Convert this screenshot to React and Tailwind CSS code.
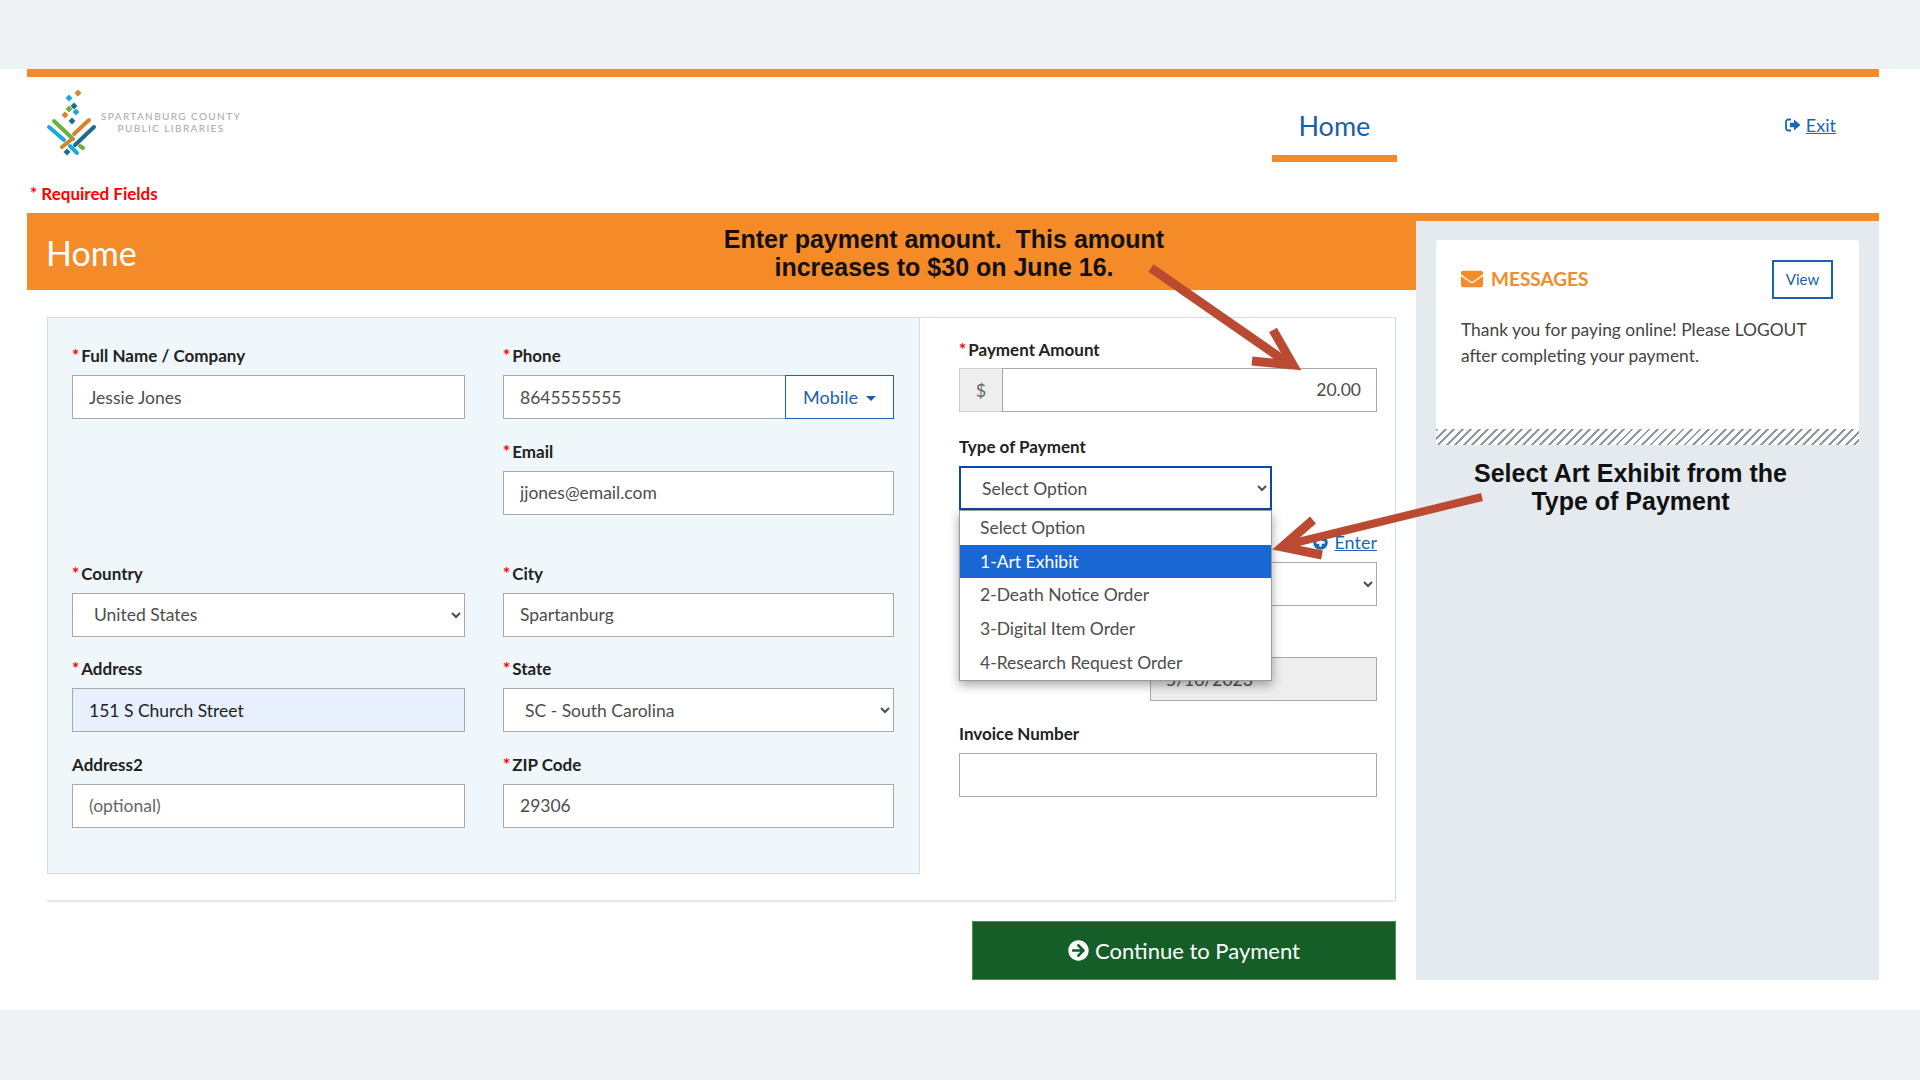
import React from 'react';
import { FaEnvelope, FaArrowCircleRight, FaPlusCircle } from 'react-icons/fa';

const Req = () => <span className="text-[#ff0000] mr-[2px]">*</span>;

const Label = ({ req, children }) => (
    <label className="block h-[23px] pt-px mb-[8px] leading-[22px] text-[17px] font-bold text-[#222]">
        {req && <Req />}
        {children}
    </label>
);

const inputCls = "block w-full h-[44px] px-[16px] border border-[#a9a9a9] text-[17.5px] outline-none placeholder:text-[#666]";
const selectCls = "block w-full h-[44px] pl-[17px] pr-[2px] border border-[#a9a9a9] bg-white text-[17.5px] text-[#4d4d4d] outline-none";

const Field = ({ label, req, value, placeholder, autofill }) => (
    <div className="h-[95.5px]">
        <Label req={req}>{label}</Label>
        <input
            readOnly
            value={value}
            placeholder={placeholder}
            className={inputCls + (autofill ? ' bg-[#e8f0fe] text-[#222]' : ' bg-white text-[#4d4d4d]')}
        />
    </div>
);

const SelectField = ({ label, req, value }) => (
    <div className="h-[95.5px]">
        <Label req={req}>{label}</Label>
        <select value={value} onChange={() => {}} className={selectCls}>
            <option>{value}</option>
        </select>
    </div>
);

const Logo = () => (
    <svg width="60" height="70" viewBox="40 88 60 70" fill="none" strokeLinecap="round" strokeWidth="4">
        <path d="M49 127L64 140" stroke="#1ba7e0" />
        <path d="M54 121L73 139" stroke="#6bb044" />
        <path d="M74 134L89 120" stroke="#d9822b" />
        <path d="M75 145L94 127" stroke="#1b6b94" />
        <path d="M62 147L72 139" stroke="#d9822b" />
        <path d="M70 146L77 153" stroke="#1ba7e0" />
        <path d="M80 146L83 148" stroke="#6bb044" />
        <g stroke="none">
            <path d="M78 89.5L81.5 93L78 96.5L74.5 93Z" fill="#d9822b" />
            <path d="M69 94.5L72.5 98L69 101.5L65.5 98Z" fill="#1ba7e0" />
            <path d="M74 102.5L77.5 106L74 109.5L70.5 106Z" fill="#1b6b94" />
            <path d="M69 105.5L72.5 109L69 112.5L65.5 109Z" fill="#6bb044" />
            <path d="M76 108.500L79.500 112L76 115.500L72.500 112Z" fill="#1ba7e0" />
            <path d="M65 111.500L68.500 115L65 118.500L61.500 115Z" fill="#d9822b" />
            <path d="M72 117.500L75.500 121L72 124.500L68.500 121Z" fill="#1b6b94" />
            <path d="M67 148.500L70.500 152L67 155.500L63.500 152Z" fill="#1b6b94" />
        </g>
    </svg>
);

const ExitIcon = () => (
    <svg width="16" height="14" viewBox="0 0 16 14" className="inline-block">
        <path d="M6 1.5H3.500A2.500 2.500 0 0 0 1 4v6a2.500 2.500 0 0 0 2.500 2.500H6" fill="none" stroke="#1a66b8" strokeWidth="1.800" />
        <path d="M5 4.800H9V1.500L15.500 7L9 12.500V9.200H5Z" fill="#1a66b8" />
    </svg>
);

const Arrows = () => (
    <svg className="absolute top-0 left-0 z-20 pointer-events-none" width="1920" height="1080" fill="none" stroke="#bb4a32" strokeWidth="9">
        <path d="M1151 268L1292 366" />
        <path d="M1273 330L1293 365L1252 361" />
        <path d="M1482 497L1290 544" strokeWidth="8" />
        <path d="M1313 520L1282 547L1322 555" />
    </svg>
);

const App = () => {
    return (
        <div className="relative w-[1920px] h-[1080px] overflow-hidden bg-[#eef2f5] font-['Lato','Noto_Sans',sans-serif]">
            <div className="h-[69px]" />
            <div className="h-[941px] bg-white pl-[27px] pr-[41px]">
                <div className="h-[8px] bg-[#f58a28]" />

                {/* header */}
                <div className="flex items-start h-[85px]">
                    <div className="flex items-start ml-[13px] pt-[11px]">
                        <Logo />
                        <div className="ml-px mt-[22px] text-center text-[10px] leading-[12px] tracking-[0.14em] text-[#a6a6a6]">
                            <div>SPARTANBURG COUNTY</div>
                            <div>PUBLIC LIBRARIES</div>
                        </div>
                    </div>
                    <div className="ml-auto w-[125px] h-[85px] pt-[30px] border-b-[7px] border-[#f58a28] text-center text-[27px] leading-[38px] text-[#1a5fa8]">
                        Home
                    </div>
                    <a href="#" className="flex items-center ml-[388px] mr-[43px] mt-[38px] text-[18px] leading-[20px] text-[#1a66b8] underline">
                        <ExitIcon />
                        <span className="ml-[5px]">Exit</span>
                    </a>
                </div>
                <div className="h-[51px] pt-[21px] pl-[3px] text-[17px] leading-[22px] font-bold text-[#ff0000]">
                    * Required Fields
                </div>

                <div className="flex items-stretch">
                    {/* main column */}
                    <div className="w-[1389px]">
                        <div className="relative h-[77px] bg-[#f58a28] flex items-center pl-[19px]">
                            <h1 className="w-[80px] mt-[2px] text-[34px] text-white">Home</h1>
                            <div className="ml-[578px] mt-[2px] w-[480px] text-center font-['Liberation_Sans',sans-serif] text-[25px] leading-[28px] font-bold text-[#111]">
                                <div className="whitespace-pre">Enter payment amount.  This amount</div>
                                <div>increases to $30 on June 16.</div>
                            </div>
                        </div>

                        <div className="pt-[27px] pl-[20px] pr-[20px]">
                            <div className="flex h-[585px] border-b-2 border-[#e4e8ea]">
                                {/* left form */}
                                <div className="w-[873px] h-[557px] bg-[#f0f7fa] border border-[#d5dde2] pl-[24px] pt-[26px]">
                                    <div className="grid grid-cols-[393px_391px] gap-x-[38px]">
                                        <div className="h-[217.5px]">
                                            <Field req label="Full Name / Company" value="Jessie Jones" />
                                        </div>
                                        <div className="h-[217.5px]">
                                            <div className="h-[95.5px]">
                                                <Label req>Phone</Label>
                                                <div className="flex">
                                                    <input readOnly value="8645555555" className={inputCls + ' border-r-0 bg-white text-[#4d4d4d]'} />
                                                    <button className="shrink-0 w-[109px] h-[44px] border border-[#1c5fb8] bg-white text-[18px] text-[#1a5fa8]">
                                                        Mobile
                                                        <span className="inline-block ml-[8px] align-middle border-x-[5px] border-t-[5px] border-x-transparent border-t-[#1a5fa8]" />
                                                    </button>
                                                </div>
                                            </div>
                                            <Field req label="Email" value="jjones@email.com" />
                                        </div>
                                        <SelectField req label="Country" value="United States" />
                                        <Field req label="City" value="Spartanburg" />
                                        <Field req autofill label="Address" value="151 S Church Street" />
                                        <SelectField req label="State" value="SC - South Carolina" />
                                        <Field label="Address2" value="" placeholder="(optional)" />
                                        <Field req label="ZIP Code" value="29306" />
                                    </div>
                                </div>

                                {/* right form */}
                                <div className="w-[476px] border-t border-r border-[#d5dde2] pl-[39px] pr-[18px] pt-[20px]">
                                    <label className="block h-[23px] pt-px mb-[7px] leading-[22px] text-[17px] font-bold text-[#222]">
                                        <Req />Payment Amount
                                    </label>
                                    <div className="flex h-[44px] mb-[23px]">
                                        <div className="w-[43px] flex items-center justify-center bg-[#eee] border border-r-0 border-[#ccc] text-[18px] text-[#666]">$</div>
                                        <input readOnly value="20.00" className="flex-1 min-w-0 px-[15px] border border-[#a9a9a9] text-right text-[17.5px] text-[#4d4d4d] outline-none" />
                                    </div>

                                    <Label>Type of Payment</Label>
                                    <div className="relative w-[313px] h-[44px] z-10">
                                        <select value="Select Option" onChange={() => {}} className="block w-full h-[44px] pl-[17px] pr-[2px] border-2 border-[#0f47a8] bg-white text-[17.5px] text-[#4d4d4d] outline-none">
                                            <option>Select Option</option>
                                        </select>
                                        <ul className="absolute top-full left-0 w-full bg-white border border-[#9a9a9a] shadow-[0_4px_10px_rgba(0,0,0,0.35)] text-[17.5px] leading-[33.7px] text-[#4d4d4d]">
                                            <li className="pl-[20px]">Select Option</li>
                                            <li className="pl-[20px] bg-[#1967d2] text-white">1-Art Exhibit</li>
                                            <li className="pl-[20px]">2-Death Notice Order</li>
                                            <li className="pl-[20px]">3-Digital Item Order</li>
                                            <li className="pl-[20px]">4-Research Request Order</li>
                                        </ul>
                                    </div>

                                    <div className="flex justify-end items-center h-[22px] mt-[21px] mb-[9px] text-[18px] text-[#1a66b8]">
                                        <FaPlusCircle className="text-[15px] mr-[6px]" />
                                        <a href="#" className="underline">Enter</a>
                                    </div>
                                    <select value="" onChange={() => {}} className={selectCls}>
                                        <option value=""></option>
                                    </select>

                                    <div className="flex justify-end mt-[51px]">
                                        <input readOnly value="5/16/2023" className="block w-[227px] h-[44px] px-[15px] border border-[#a9a9a9] bg-[#eee] text-[17.5px] text-[#4d4d4d] outline-none" />
                                    </div>

                                    <div className="mt-[21px]">
                                        <Label>Invoice Number</Label>
                                        <input readOnly value="" className={inputCls + ' bg-white'} />
                                    </div>
                                </div>
                            </div>

                            <div className="flex justify-end mt-[19px]">
                                <button className="flex items-center justify-center w-[424px] h-[59px] bg-[#155e27] border border-[#3f9a50] text-[22px] text-white">
                                    <FaArrowCircleRight className="text-[21px] mr-[6px]" />
                                    Continue to Payment
                                </button>
                            </div>
                        </div>
                    </div>

                    {/* messages column */}
                    <div className="w-[463px] h-[767px] border-t-[8px] border-[#f58a28] bg-[#e5eaee] p-[20px] pt-[19px]">
                        <div className="relative h-[205px] bg-white rounded-[3px] overflow-hidden px-[25px] pt-[20px]">
                            <div className="flex items-center justify-between h-[38px] pr-px">
                                <div className="flex items-center text-[19px] font-bold text-[#f58a28]">
                                    <FaEnvelope className="text-[22px] mr-[8px]" />
                                    MESSAGES
                                </div>
                                <button className="w-[61px] h-[39px] border-2 border-[#1c5fb8] text-[15px] text-[#1a5fa8]">View</button>
                            </div>
                            <p className="mt-[19px] text-[17.4px] leading-[26px] text-[#444]">
                                Thank you for paying online! Please LOGOUT<br />after completing your payment.
                            </p>
                            <div className="absolute bottom-0 left-0 right-0 h-[16px] bg-[repeating-linear-gradient(135deg,#8c9c98_0,#8c9c98_2px,#ffffff_2px,#ffffff_6px)]" />
                        </div>
                        <div className="mt-[14px] pr-[34px] text-center font-['Liberation_Sans',sans-serif] text-[25px] leading-[28px] font-bold text-[#111]">
                            <div>Select Art Exhibit from the</div>
                            <div>Type of Payment</div>
                        </div>
                    </div>
                </div>
            </div>
            <Arrows />
        </div>
    );
}

export default App;
